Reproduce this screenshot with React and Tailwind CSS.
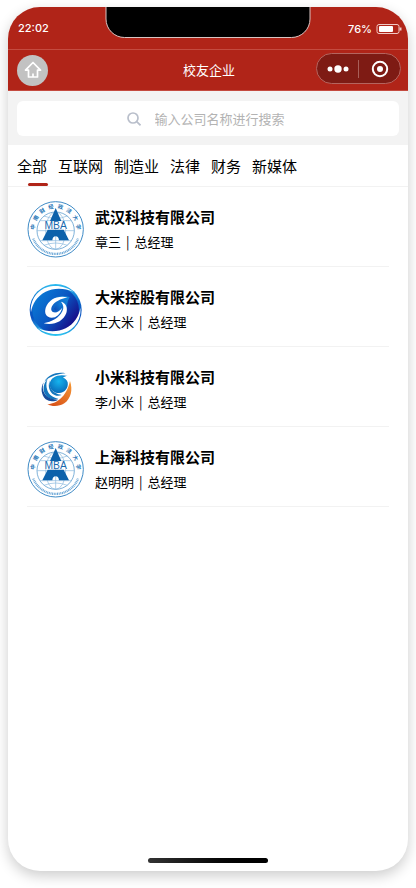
import React, { useState } from 'react';

const tabs = ['全部', '互联网', '制造业', '法律', '财务', '新媒体'];

const companies = [
  { name: '武汉科技有限公司', contact: '章三', role: '总经理', logo: 'mba' },
  { name: '大米控股有限公司', contact: '王大米', role: '总经理', logo: 'swirl' },
  { name: '小米科技有限公司', contact: '李小米', role: '总经理', logo: 'comet' },
  { name: '上海科技有限公司', contact: '赵明明', role: '总经理', logo: 'mba' },
];

const sealText = '中南财经政法大学'.split('');

const MbaLogo = () => (
  <svg viewBox="36 33 171 171" className="h-[57px] w-[57px] shrink-0" fill="none" aria-hidden="true">
    <g stroke="#3f8bc6" strokeWidth="2">
      <circle cx="122" cy="118" r="83" strokeWidth="3" />
      <circle cx="122" cy="122" r="56" />
      <path d="M55 146A72 72 0 0 0 189 146" strokeWidth="7" strokeDasharray="3 2" stroke="#6aa6d6" />
      <g stroke="#86b6dc">
        <ellipse cx="122" cy="122" rx="30" ry="56" />
        <path d="M122 66v112M75 92h94M66 122h112M75 152h94M87 78q35 14 70 0M87 166q35 -14 70 0" />
      </g>
    </g>
    <g fill="#2173b5" fontSize="16" fontWeight="700" textAnchor="middle" fontFamily="Noto Sans CJK SC, sans-serif">
      {sealText.map((char, i) => (
        <text key={char} x="122" y="55" transform={`rotate(${i * 24 - 84} 122 118)`}>{char}</text>
      ))}
    </g>
    <path d="M122 54L139 93H105Z" fill="#0d62ab" />
    <path d="M88 94h66v24H88z" fill="#fff" fillOpacity="0.85" />
    <path d="M98 119h48l16 32h-30q-1 -12 -10 -12t-10 12H82z" fill="#0d62ab" />
    <text x="122" y="117" textAnchor="middle" fill="#1869ae" fontSize="31" fontFamily="Liberation Sans, sans-serif">MBA</text>
  </svg>
);

const SwirlLogo = () => (
  <svg viewBox="36 18 171 171" className="h-[57px] w-[57px] shrink-0" aria-hidden="true">
    <defs>
      <linearGradient id="swirl-ring" x1="0" y1="0" x2="0" y2="1">
        <stop offset="0" stopColor="#2fbdf0" />
        <stop offset="0.35" stopColor="#0a62c8" />
        <stop offset="0.65" stopColor="#0a52c0" />
        <stop offset="1" stopColor="#2fc8f2" />
      </linearGradient>
      <linearGradient id="swirl-body" x1="0.1" y1="0.2" x2="0.9" y2="0.8">
        <stop offset="0" stopColor="#0b78d4" />
        <stop offset="0.5" stopColor="#0a57c2" />
        <stop offset="1" stopColor="#170a86" />
      </linearGradient>
      <linearGradient id="swirl-core" x1="1" y1="0" x2="0" y2="1">
        <stop offset="0" stopColor="#1487dc" />
        <stop offset="1" stopColor="#0a46b4" />
      </linearGradient>
    </defs>
    <circle cx="122" cy="105" r="78" fill="url(#swirl-ring)" />
    <circle cx="122" cy="105" r="70" fill="url(#swirl-body)" />
    <path d="M164 66C134 57 103 70 91 96C86 112 90 123 101 130C118 138 140 130 153 114C158 98 153 84 164 66Z" fill="url(#swirl-core)" />
    <g fill="#fff">
      <path d="M158 67C128 60 102 72 92 98C87 116 94 126 110 128C124 128 136 118 142 98C134 108 126 113 117 112C108 110 107 102 111 94C119 80 136 72 158 67Z" />
      <path d="M86 145C116 152 144 140 154 114C159 96 152 84 138 80C146 90 147 100 142 109C132 130 110 140 86 145Z" />
      <path d="M48 112C44 76 68 40 108 34C134 30 158 38 176 51C148 38 116 38 92 50C66 64 52 86 48 112Z" />
      <path d="M196 98C200 134 176 170 136 176C110 180 86 172 68 159C96 172 128 172 152 160C178 146 192 124 196 98Z" />
    </g>
    <path d="M118 100C122 92 128 86 138 82C140 90 138 100 130 106C124 109 118 108 118 100Z" fill="url(#swirl-core)" />
  </svg>
);

const CometLogo = () => (
  <svg viewBox="36 18 171 171" className="h-[57px] w-[57px] shrink-0" fill="none" aria-hidden="true">
    <defs>
      <radialGradient id="comet-ball" cx="0.5" cy="0.35" r="0.65">
        <stop offset="0" stopColor="#16b4ee" />
        <stop offset="1" stopColor="#096cba" />
      </radialGradient>
      <linearGradient id="comet-tail" x1="1" y1="0" x2="0.3" y2="1">
        <stop offset="0" stopColor="#f79a35" />
        <stop offset="1" stopColor="#d95419" />
      </linearGradient>
    </defs>
    <path d="M165 78C174 104 168 131 148 145C132 156 110 155 97 148C124 146 154 127 165 78Z" fill="url(#comet-tail)" />
    <path d="M88 80C100 58 126 50 152 55C130 56 104 64 88 80Z" fill="#1476bd" />
    <path d="M158 63C132 56 108 64 104 86C104 102 116 114 132 114C150 114 161 98 158 82C155 73 150 70 144 68C148 65 152 63 158 63Z" fill="url(#comet-ball)" />
    <path d="M98 72C84 86 82 106 92 120C100 132 114 136 130 131C114 128 102 120 97 106C93 94 93 82 98 72Z" fill="#1476bd" />
    <path d="M104 76C99 92 101 106 112 116C120 122 130 124 140 120C126 118 114 112 108 100C104 92 103 84 104 76Z" fill="#1476bd" />
    <path d="M86 82C76 98 78 120 92 133C104 141 118 140 130 134C112 134 98 129 90 118C82 106 82 94 86 82Z" fill="#174c9b" />
  </svg>
);

const logos = { mba: MbaLogo, swirl: SwirlLogo, comet: CometLogo };

const StatusBar = () => (
  <div className="relative flex h-[42px] items-center justify-between pl-[10px] pr-[6px] font-[Inter,sans-serif] text-[11px] font-medium text-white">
    <span>22:02</span>
    <div className="absolute -top-px left-1/2 h-8 w-[205px] -translate-x-1/2 rounded-b-[19px] border border-[#d8c4c2] bg-black" />
    <div className="flex items-center gap-1 pt-[3px]">
      <span>76%</span>
      <svg viewBox="0 0 26 11" className="h-[11px] w-[26px]" fill="none" aria-hidden="true">
        <rect x="1" y="0.5" width="22" height="9" rx="2" stroke="#f0c8c4" />
        <rect x="3" y="2" width="14" height="6" rx="1" fill="#fff" />
        <path d="M24.5 3.5v3" stroke="#f0c8c4" strokeWidth="2" />
      </svg>
    </div>
  </div>
);

const Header = () => (
  <header className="grid h-[42px] grid-cols-[1fr_auto_1fr] items-center border-y border-[#c44b40] pl-[9px] pr-[7px]">
    <button type="button" aria-label="首页" className="flex h-[31px] w-[31px] items-center justify-center rounded-full bg-[#c2c2c2]">
      <svg viewBox="0 0 18 18" className="h-[18px] w-[18px]" fill="none" stroke="#fff" strokeWidth="1.7" strokeLinejoin="round" aria-hidden="true">
        <path d="M9 1.5L1.5 9.2H4.5V16H13.5V9.2H16.5Z" />
        <path d="M9 12.5V16" />
      </svg>
    </button>
    <h1 className="text-[13px] leading-5 text-white">校友企业</h1>
    <div className="mb-[3px] flex h-[31px] w-[85px] items-center justify-self-end rounded-full border border-[#b5645e] bg-[#7e1b14]">
      <button type="button" aria-label="更多" className="flex h-full flex-1 items-center justify-center">
        <svg viewBox="0 0 22 8" className="h-2 w-[22px]" fill="#fff" aria-hidden="true">
          <circle cx="3" cy="4" r="2.5" />
          <circle cx="11" cy="4" r="3.7" />
          <circle cx="19" cy="4" r="2.5" />
        </svg>
      </button>
      <span className="h-[18px] w-px bg-[#a85f59]" />
      <button type="button" aria-label="关闭" className="flex h-full flex-1 items-center justify-center">
        <svg viewBox="0 0 18 18" className="h-[18px] w-[18px]" aria-hidden="true">
          <circle cx="9" cy="9" r="7.2" fill="none" stroke="#fff" strokeWidth="2" />
          <circle cx="9" cy="9" r="3" fill="#fff" />
        </svg>
      </button>
    </div>
  </header>
);

const App = () => {
  const [activeTab, setActiveTab] = useState('全部');
  const [keyword, setKeyword] = useState('');

  return (
    <div className="flex min-h-screen bg-white px-2 pb-[17px] pt-[7px] font-['Noto_Sans_CJK_SC',sans-serif] text-black">
      <div className="flex flex-1 flex-col overflow-hidden rounded-[32px] bg-white shadow-[0_5px_14px_rgba(0,0,0,0.2)]">
        <div className="bg-[#b02418]">
          <StatusBar />
          <Header />
        </div>

        <div className="bg-[#f3f3f3] px-[9px] pb-[9px] pt-[10px]">
          <label className="flex h-[35px] items-center justify-center gap-[14px] rounded-md bg-white">
            <svg viewBox="0 0 14 14" className="h-[14px] w-[14px]" fill="none" stroke="#b9bfcb" strokeWidth="1.7" aria-hidden="true">
              <circle cx="6" cy="6" r="5" />
              <path d="M9.7 9.7L13.5 13.3" />
            </svg>
            <input
              type="text"
              aria-label="搜索公司"
              className="w-[135px] text-[13px] leading-5 outline-none placeholder:text-[#b3b3b3]"
              placeholder="输入公司名称进行搜索"
              value={keyword}
              onChange={(e) => setKeyword(e.target.value)}
            />
          </label>
        </div>

        <nav className="flex gap-[11px] border-b border-[#f2f2f2] px-[9px]">
          {tabs.map((tab) => (
            <button
              key={tab}
              type="button"
              onClick={() => setActiveTab(tab)}
              className="relative h-[41px] pt-[2px] text-[15px]"
            >
              {tab}
              {activeTab === tab && (
                <span className="absolute bottom-0 left-[11px] h-[3px] w-5 rounded-sm bg-[#b02418]" />
              )}
            </button>
          ))}
        </nav>

        <ul className="flex-1 px-[19px]">
          {companies
            .filter((company) => company.name.includes(keyword))
            .map((company) => {
              const Logo = logos[company.logo];
              return (
                <li key={company.name} className="flex items-center gap-[11px] border-b border-[#f2f2f2] pb-2 pt-[14px]">
                  <Logo />
                  <div className="pb-px">
                    <h2 className="text-[15px] font-bold leading-[25px]">{company.name}</h2>
                    <p className="text-[13px] leading-[25px]">
                      {company.contact}
                      <span className="mx-[5px]">|</span>
                      {company.role}
                    </p>
                  </div>
                </li>
              );
            })}
        </ul>

        <div className="mx-auto mb-2 h-[5px] w-[120px] rounded-full bg-linear-to-r from-[#333333] to-black" />
      </div>
    </div>
  );
};

export default App;
